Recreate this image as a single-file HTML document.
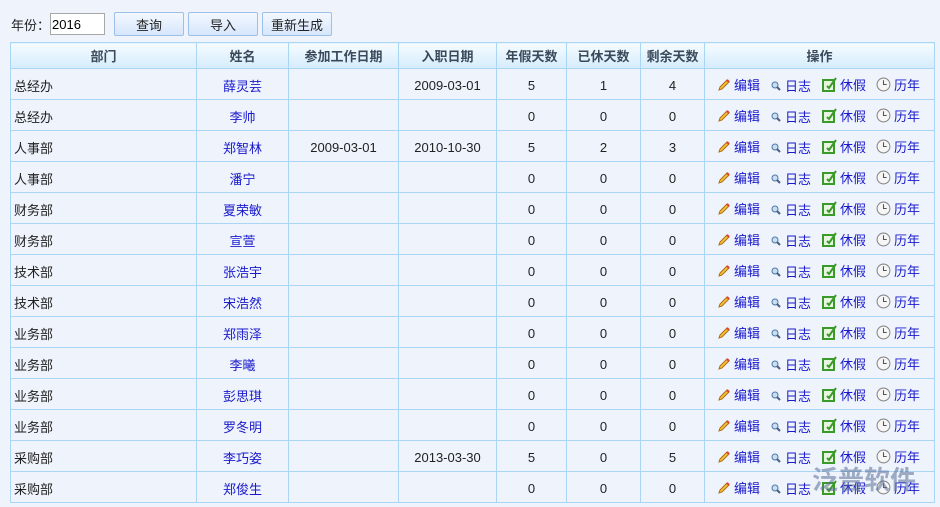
<!DOCTYPE html><html><head><meta charset="utf-8"><style>
body{margin:0;width:940px;height:507px;overflow:hidden;background:#eef3fc;font-family:"Liberation Sans","Noto Sans CJK SC",sans-serif;font-size:13px;color:#222}
.top{position:absolute;left:11px;top:11px;height:26px;display:flex;align-items:center}
.top input{width:55px;height:22px;box-sizing:border-box;border:1px solid #a8a8a8;font:13px "Liberation Sans",sans-serif;padding:0 1px;margin-right:9px;background:#fff}
.btn{height:24px;box-sizing:border-box;border:1px solid #9cc0ea;border-radius:2px;background:linear-gradient(#f4f8ff,#d6e6fb);display:inline-flex;align-items:center;justify-content:center;margin-right:4px;font-size:13px}
table{position:absolute;left:10px;top:42px;border-collapse:collapse;table-layout:fixed;width:924px}
td,th{border:1px solid #a9d6f5;padding:0;text-align:center}
td{height:28px;padding-top:2px}
th{height:25px;background:linear-gradient(#f5fbff,#d5ecfb);color:#3a4a5a;font-weight:bold;font-size:13px}
td.l{text-align:left;padding-left:3px}
a{color:#1a1acc;text-decoration:none}
.op{text-align:left;padding-left:12px;white-space:nowrap}
.op span{display:inline-flex;align-items:center;color:#1a1acc}
.op span.a{width:53px}.op span.b{width:52px}.op span.c{width:54px}
.op svg{margin-right:3px}
.wm{position:absolute;left:812px;top:460px;color:rgba(90,110,150,.55);font-size:26px;font-weight:bold}
</style></head><body>
<div class="top">年份：<input value="2016"><div class="btn" style="width:70px">查询</div><div class="btn" style="width:70px">导入</div><div class="btn" style="width:70px">重新生成</div></div>
<table><colgroup><col style="width:186px"><col style="width:92px"><col style="width:110px"><col style="width:98px"><col style="width:70px"><col style="width:74px"><col style="width:64px"><col style="width:230px"></colgroup>
<tr><th>部门</th><th>姓名</th><th>参加工作日期</th><th>入职日期</th><th>年假天数</th><th>已休天数</th><th>剩余天数</th><th>操作</th></tr>
<tbody id="b"></tbody></table>
<script>
var d=[["总经办","薛灵芸","","2009-03-01",5,1,4],["总经办","李帅","","",0,0,0],["人事部","郑智林","2009-03-01","2010-10-30",5,2,3],["人事部","潘宁","","",0,0,0],["财务部","夏荣敏","","",0,0,0],["财务部","宣萱","","",0,0,0],["技术部","张浩宇","","",0,0,0],["技术部","宋浩然","","",0,0,0],["业务部","郑雨泽","","",0,0,0],["业务部","李曦","","",0,0,0],["业务部","彭思琪","","",0,0,0],["业务部","罗冬明","","",0,0,0],["采购部","李巧姿","","2013-03-30",5,0,5],["采购部","郑俊生","","",0,0,0]];
var pen='<svg width="14" height="14" viewBox="0 0 14 14"><path d="M2 12 L3 9 L10 2 L12 4 L5 11 Z" fill="#f3c33a" stroke="#b26a10" stroke-width="1"/><path d="M10 2 L12 4" stroke="#e04040" stroke-width="2"/></svg>';
var mag='<svg width="12" height="12" viewBox="0 0 12 12"><circle cx="5" cy="5" r="3" fill="#cde" stroke="#4a78a8"/><path d="M7 7 L10 10" stroke="#4a6080" stroke-width="2"/></svg>';
var chk='<svg width="15" height="15" viewBox="0 0 15 15"><rect x="1" y="3" width="11" height="11" fill="#e8f6e0" stroke="#3a9a2a" stroke-width="2"/><path d="M5 9 L7 11 L14 1" stroke="#3a9a2a" stroke-width="2" fill="none"/></svg>';
var clk='<svg width="15" height="15" viewBox="0 0 14 14"><circle cx="7" cy="7" r="6" fill="#f6f6f6" stroke="#888"/><path d="M7 3 V7 H10" stroke="#555" fill="none"/></svg>';
var h='';d.forEach(function(r){h+='<tr><td class="l">'+r[0]+'</td><td><a>'+r[1]+'</a></td><td>'+r[2]+'</td><td>'+r[3]+'</td><td>'+r[4]+'</td><td>'+r[5]+'</td><td>'+r[6]+'</td><td class="op"><span class="a">'+pen+'编辑</span><span class="b">'+mag+'日志</span><span class="c">'+chk+'休假</span><span>'+clk+'历年</span></td></tr>'});
document.getElementById('b').innerHTML=h;
</script>
<div class="wm">泛普软件</div>
</body></html>
